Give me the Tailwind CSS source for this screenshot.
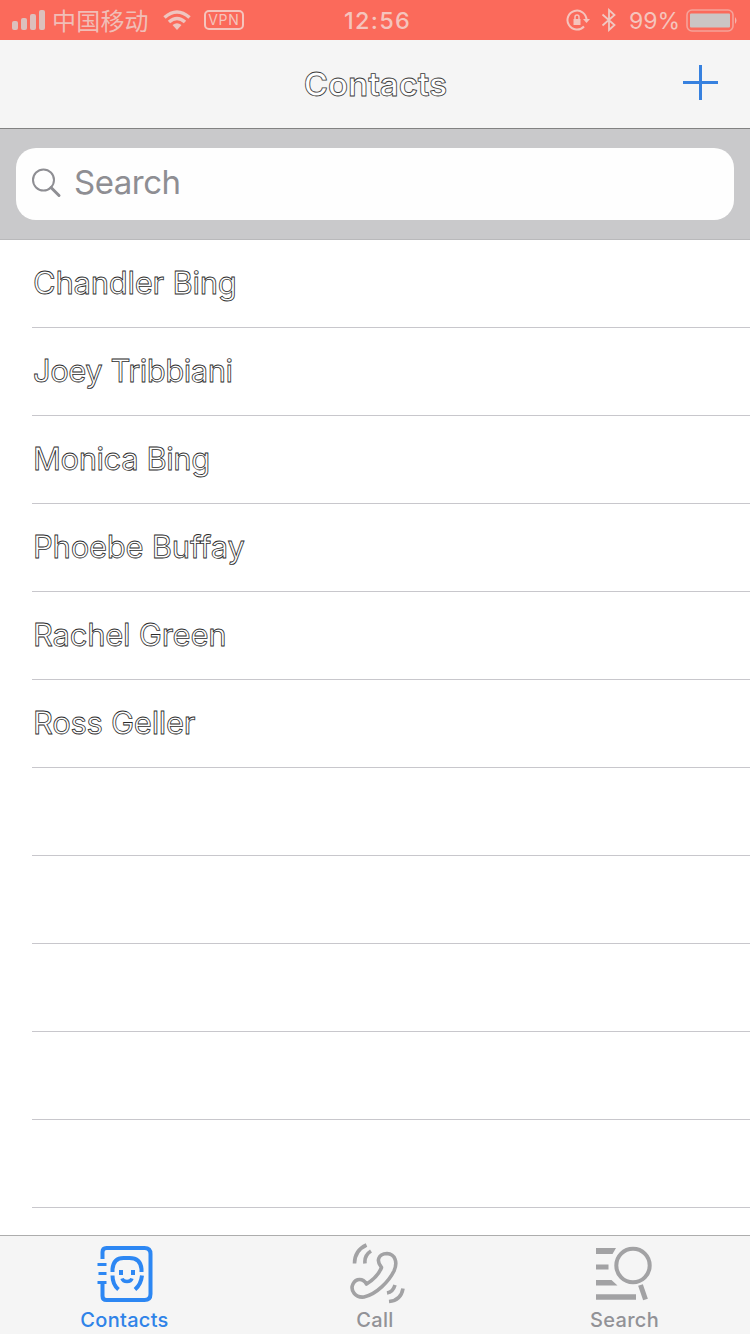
<!DOCTYPE html>
<html lang="en">
<head>
<meta charset="utf-8">
<title>Contacts</title>
<script src="https://cdn.jsdelivr.net/npm/@tailwindcss/browser@4"></script>
</head>
<body class="w-[750px] h-[1334px] overflow-hidden bg-white font-['Inter','Noto_Sans_CJK_SC',sans-serif] flex flex-col">
<header class="h-10 shrink-0 bg-[#fb6a5b] text-[#f5c4bd] grid grid-cols-[344px_1fr_184px] items-center">
  <div class="flex items-center h-10 pl-3">
    <svg class="w-[34px] h-[22px]" viewBox="0 0 34 22" fill="#dcc0bd"><rect x="0" y="12" width="6" height="9" rx="2"/><rect x="9" y="9" width="6" height="12" rx="2"/><rect x="18" y="5" width="6" height="16" rx="2"/><rect x="27" y="1" width="6" height="20" rx="2"/></svg>
    <span class="ml-[6px] text-[24px] leading-[40px] font-normal tracking-[0.2px] whitespace-nowrap text-[#f0beb7] font-['Noto_Sans_CJK_SC',sans-serif]">中国移动</span>
    <svg class="ml-[13px] w-[30px] h-[22px]" viewBox="0 0 30 22" fill="none" stroke="#efc5bf" stroke-width="3.6"><path d="M2.500 8.500Q15-2.500 27.500 8.500M7 13Q15 6 23 13"/><path d="M10.500 16Q15 12.500 19.500 16L15 21Z" fill="#efc5bf" stroke="none"/></svg>
    <span class="ml-[12px] w-10 h-5 border-2 border-[#f5c4bd] rounded-[5px] flex items-center justify-center text-[14px] leading-none tracking-[0.6px]">VPN</span>
  </div>
  <div class="h-10 pt-px text-[23.500px] font-medium leading-[39px] tracking-[1.3px] whitespace-nowrap">12:56</div>
  <div class="flex items-center h-10">
    <svg class="w-[24px] h-[24px]" viewBox="0 0 24 24" fill="none" stroke="#f5c4bd" stroke-width="2"><path d="M18 18.500A9.500 9.500 0 1 1 20.500 12"/><path d="M17 11h7l-3.500 4z" fill="#f5c4bd" stroke="none"/><rect x="7.500" y="11" width="7" height="6" fill="#f5c4bd" stroke="none"/><path d="M9 11V9a2 2 0 0 1 4 0v2" stroke-width="1.500"/></svg>
    <svg class="ml-[11px] w-[16px] h-[24px]" viewBox="0 0 16 24" fill="none" stroke="#f0c8c2" stroke-width="1.800"><path d="M1.500 6.500L13.500 17L8 22V2L13.500 7L1.500 17.500"/></svg>
    <span class="ml-[12px] w-[51px] pt-[2px] text-[23px] leading-[38px] whitespace-nowrap">99%</span>
    <svg class="ml-[5px] w-[54px] h-[26px]" viewBox="0 0 54 26" fill="none"><rect x="2" y="3" width="46" height="21" rx="5" stroke="#f5a299" stroke-width="1.600"/><rect x="5" y="6.500" width="40" height="14" rx="1" fill="#cbc5c4"/><path d="M50 10q3 3.500 0 7z" fill="#f5b5ad"/></svg>
  </div>
</header>
<nav class="h-[89px] shrink-0 bg-[#f5f5f5] border-b border-[#828282] grid grid-cols-[1fr_160px_1fr] items-center">
  <div></div>
  <h1 class="text-[33px] leading-[40px] font-semibold text-center whitespace-nowrap text-white indent-[1px] tracking-[-0.1px] [-webkit-text-stroke:0.8px_#3a3a3a]">Contacts</h1>
  <button class="justify-self-end mr-8 mb-[3px]" aria-label="Add"><svg class="block w-[35px] h-[35px]" viewBox="0 0 35 35"><path d="M17.500 0v35M0 17.500h35" stroke="#3781df" stroke-width="3"/></svg></button>
</nav>
<section class="h-[111px] shrink-0 bg-[#c9c9cb] border-b border-[#b9b9bb] px-4 pt-[19px]">
  <div class="h-[72px] rounded-[20px] bg-[#fefefe] flex items-center pl-4">
    <svg class="mb-[2px] w-[30px] h-[30px]" viewBox="0 0 30 30" fill="none" stroke="#8e8e93"><circle cx="11.500" cy="12" r="10.500" stroke-width="2"/><path d="M19 19.500l8 8" stroke-width="3" stroke-linecap="round"/></svg>
    <span class="ml-[12px] pb-[4px] text-[33px] leading-[40px] tracking-[-0.5px] text-[#8e8e93] whitespace-nowrap">Search</span>
  </div>
</section>
<main class="flex-1 min-h-0 overflow-hidden pl-8 text-[31px] leading-[86px] text-white whitespace-nowrap [-webkit-text-stroke:0.8px_#2c2c2c]">
  <div class="h-[88px] border-b border-[#c8c7cc] indent-[1px] tracking-[-0.25px]">Chandler Bing</div>
  <div class="h-[88px] border-b border-[#c8c7cc] indent-[1px] tracking-[-0.5px]">Joey Tribbiani</div>
  <div class="h-[88px] border-b border-[#c8c7cc] indent-[1px] tracking-[-0.45px]">Monica Bing</div>
  <div class="h-[88px] border-b border-[#c8c7cc] indent-[1px] tracking-[-0.25px]">Phoebe Buffay</div>
  <div class="h-[88px] border-b border-[#c8c7cc] indent-[1px] tracking-[-0.25px]">Rachel Green</div>
  <div class="h-[88px] border-b border-[#c8c7cc] indent-[1px] tracking-[-0.3px]">Ross Geller</div>
  <div class="h-[88px] border-b border-[#c8c7cc]"></div>
  <div class="h-[88px] border-b border-[#c8c7cc]"></div>
  <div class="h-[88px] border-b border-[#c8c7cc]"></div>
  <div class="h-[88px] border-b border-[#c8c7cc]"></div>
  <div class="h-[88px] border-b border-[#c8c7cc]"></div>
</main>
<footer class="h-[99px] shrink-0 bg-[#f5f5f5] border-t border-[#adadad] grid grid-cols-3 text-[20px] leading-[24px] font-medium tracking-[0.3px] text-[#929297] text-center">
  <div class="flex flex-col items-center pt-[6px] text-[#2f83e8]">
    <svg class="w-[64px] h-[64px]" viewBox="93.5 1242 64 64" fill="none" stroke="#2d87f3" stroke-width="4"><path d="M103 1259v-7q0-4 4-4h38q6 0 6 6v40q0 6-6 6h-38q-4 0-4-4v-13"/><path d="M98 1264.500h9M99 1273.500h8M98 1282.500h9" stroke-width="3"/><path d="M113 1272v-3Q114 1258 124 1258h6Q141 1258 142 1269v3M113 1275.500q0 9 6 14M142.500 1275.500q-1 9-7 14"/><path d="M121.500 1270v5M133.500 1270v5"/><path d="M122.500 1278.500q1 3 5 3t5-3" stroke-width="3.500"/></svg>
    <span class="mt-[2px] mr-[1px]">Contacts</span>
  </div>
  <div class="flex flex-col items-center pt-[6px]">
    <svg class="w-[64px] h-[64px]" viewBox="343 1242 64 64" fill="none" stroke="#a2a2a4" stroke-width="3.600"><path d="M381.500 1267.500C376 1261 378 1254 387 1253.500C395 1254 398 1262 394 1271C389 1281 377 1294 364 1297C355 1298 350 1290 353 1284C356 1278 363 1278 366.500 1284C373 1280 379 1274 381.500 1267.500Z" stroke-linejoin="round"/><path d="M354.500 1263.500q0-13 12-18.500M365 1263.500q-1-8 6-12.500M387 1293q6-1 8-8M389 1301.500q12-1 14-13"/></svg>
    <span class="mt-[2px]">Call</span>
  </div>
  <div class="flex flex-col items-center pt-[6px]">
    <svg class="w-[64px] h-[64px]" viewBox="593 1242 64 64" fill="none" stroke="#a2a2a4" stroke-width="4.500"><circle cx="633" cy="1265.500" r="16.700" stroke-width="4"/><path d="M640.500 1285l5 14.500" stroke-width="5"/><path d="M596 1297h40" stroke-width="5.500"/><g fill="#a2a2a4" stroke="none"><path d="M596 1248h20l-3.500 6H596zM596 1264.500h12.500v5H596zM596 1280h15.500l6 5.500H596z"/></g></svg>
    <span class="mt-[2px] mr-[1px]">Search</span>
  </div>
</footer>
</body>
</html>
